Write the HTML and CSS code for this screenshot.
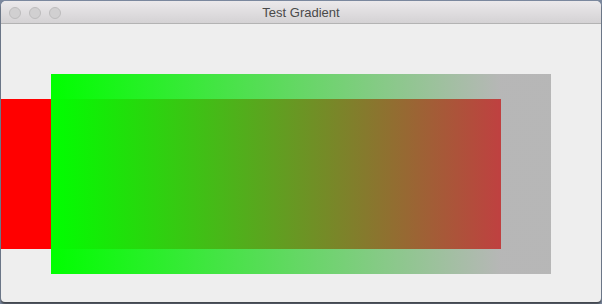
FILE: index.html
```html
<!DOCTYPE html>
<html>
<head>
  <meta name="viewport" content="width=device-width, initial-scale=1.0">
  <title>Test Gradient</title>
  <link rel="stylesheet" href="styles.css">
</head>
<body>
  <div class="window">
    <div class="titlebar">
      <div class="lights">
        <span class="light"></span>
        <span class="light"></span>
        <span class="light"></span>
      </div>
      <div class="title">Test Gradient</div>
    </div>
    <div class="canvas">
      <div class="shape red-rect"></div>
      <div class="shape gradient-rect"></div>
    </div>
  </div>
</body>
</html>
```

FILE: styles.css
```css
* {
  box-sizing: border-box;
}

body {
  margin: 0;
  width: 602px;
  height: 304px;
  background-color: #7b889e;
  font-family: "Liberation Sans", Arial, sans-serif;
  padding: 1px 1px 0 1px;
  overflow: hidden;
}

.window {
  width: 600px;
  height: 301px;
  background-color: #eeeeee;
  border-radius: 5px 5px 4px 4px;
  overflow: hidden;
  display: flex;
  flex-direction: column;
  box-shadow: 0 2px 2px rgba(40, 40, 40, 0.7);
}

.titlebar {
  position: relative;
  height: 23px;
  flex: none;
  background: linear-gradient(to bottom, #ebe9eb, #d4d2d4);
  border-bottom: 1px solid #b3b3b3;
  display: flex;
  align-items: center;
}

.lights {
  display: flex;
  gap: 8px;
  padding-left: 8px;
  padding-top: 1px;
}

.light {
  width: 12px;
  height: 12px;
  border-radius: 50%;
  background-color: #d1d0d1;
  border: 1px solid #bdbcbd;
}

.title {
  position: absolute;
  left: 0;
  right: 0;
  top: 0;
  line-height: 23px;
  text-align: center;
  font-size: 13px;
  color: #4a4a4a;
}

.canvas {
  position: relative;
  flex: 1;
}

.shape {
  position: absolute;
}

.red-rect {
  left: 0;
  top: 75px;
  width: 500px;
  height: 150px;
  background-color: #ff0000;
}

.gradient-rect {
  left: 50px;
  top: 50px;
  width: 500px;
  height: 200px;
  background: linear-gradient(to right, rgb(0, 255, 0) 0, rgba(128, 128, 128, 0.5) 450px);
}
```
